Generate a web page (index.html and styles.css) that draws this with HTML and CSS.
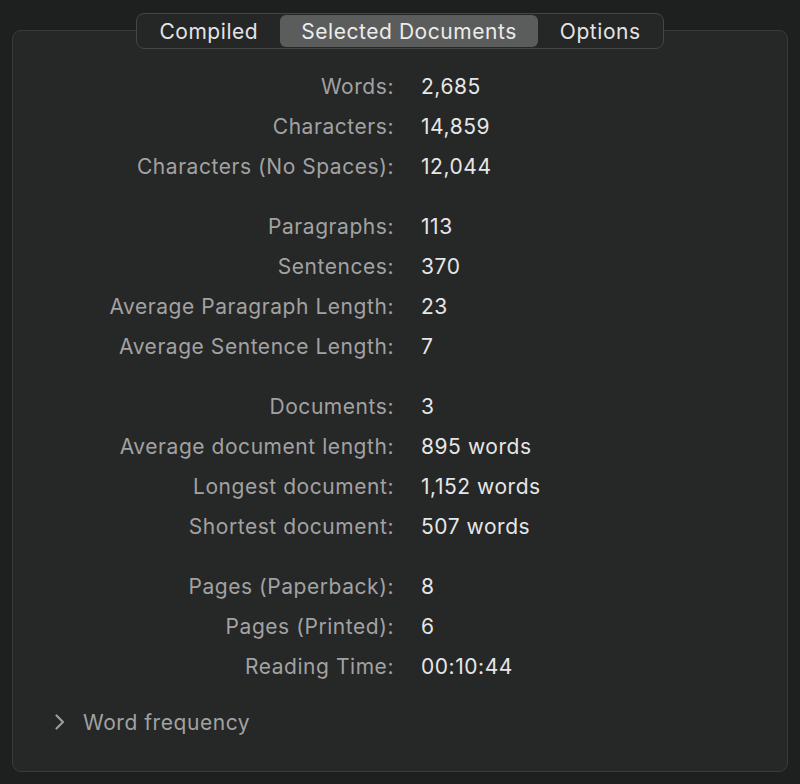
FILE: index.html
```html
<!DOCTYPE html>
<html>
<head>
<meta charset="utf-8">
<link rel="stylesheet" href="styles.css">
</head>
<body>
<div class="window">
  <div class="tabs">
    <div class="tab">Compiled</div>
    <div class="tab active">Selected Documents</div>
    <div class="tab">Options</div>
  </div>
  <div class="panel">
    <div class="group">
      <div class="label">Words:</div><div class="value">2,685</div>
      <div class="label">Characters:</div><div class="value">14,859</div>
      <div class="label">Characters (No Spaces):</div><div class="value">12,044</div>
    </div>
    <div class="group">
      <div class="label">Paragraphs:</div><div class="value">113</div>
      <div class="label">Sentences:</div><div class="value">370</div>
      <div class="label">Average Paragraph Length:</div><div class="value">23</div>
      <div class="label">Average Sentence Length:</div><div class="value">7</div>
    </div>
    <div class="group">
      <div class="label">Documents:</div><div class="value">3</div>
      <div class="label">Average document length:</div><div class="value">895 words</div>
      <div class="label">Longest document:</div><div class="value">1,152 words</div>
      <div class="label">Shortest document:</div><div class="value">507 words</div>
    </div>
    <div class="group group-last">
      <div class="label">Pages (Paperback):</div><div class="value">8</div>
      <div class="label">Pages (Printed):</div><div class="value">6</div>
      <div class="label">Reading Time:</div><div class="value">00:10:44</div>
    </div>
    <div class="disclosure">
      <svg class="chevron" width="12" height="18" viewBox="0 0 12 18"><path d="M2.5 2.5 L9 9 L2.5 15.5" fill="none" stroke="#9c9c9c" stroke-width="2.2" stroke-linecap="round" stroke-linejoin="round"/></svg>
      <span>Word frequency</span>
    </div>
  </div>
</div>
</body>
</html>
```

FILE: styles.css
```css
html, body {
  margin: 0;
  padding: 0;
  background: #1e1f1f;
  font-family: Inter, "Noto Sans", sans-serif;
  font-size: 21px;
  letter-spacing: 0.55px;
}
.window {
  display: flex;
  flex-direction: column;
  align-items: center;
  padding: 13px 12px 0 12px;
  height: 771px;
}
.tabs {
  position: relative;
  z-index: 1;
  display: flex;
  height: 32px;
  padding: 1px;
  background: #252626;
  border: 1px solid #444545;
  border-radius: 8px;
  margin-bottom: -19px;
}
.tab {
  display: flex;
  align-items: center;
  padding: 1px 21.5px 0 21.5px;
  color: #e4e4e4;
  border-radius: 6px;
}
.tab.active {
  background: #5b5c5c;
  color: #ececec;
}
.panel {
  align-self: stretch;
  background: #262727;
  border: 1px solid #3a3b3b;
  border-radius: 9px;
  padding-top: 36px;
  box-sizing: border-box;
  height: 742px;
}
.group {
  display: grid;
  grid-template-columns: 381px 1fr;
  column-gap: 27px;
  margin-bottom: 20px;
}
.group-last {
  margin-bottom: 15px;
}
.label, .value {
  height: 40px;
  line-height: 40px;
  white-space: nowrap;
}
.label {
  text-align: right;
  color: #a2a2a2;
}
.value {
  color: #e6e6e6;
}
.disclosure {
  display: flex;
  align-items: center;
  height: 40px;
  padding-left: 41px;
  gap: 17px;
  color: #a2a2a2;
}
.chevron {
  display: block;
}
```
